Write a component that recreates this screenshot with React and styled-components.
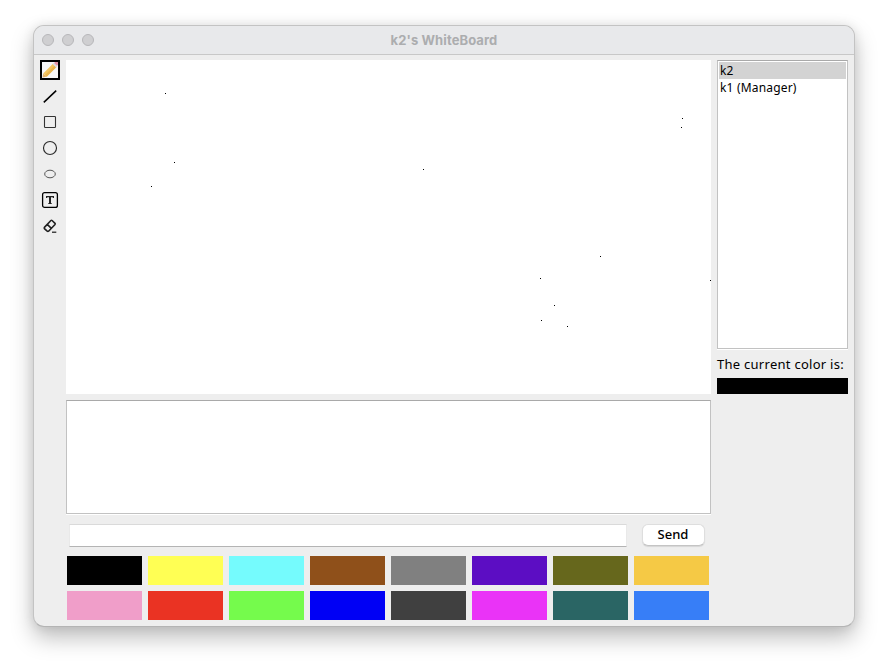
import React from "react";
import styled, { createGlobalStyle } from "styled-components";

const Global = createGlobalStyle`
  * { box-sizing: border-box; }
  html, body { margin: 0; background: #fff; }
  body { overflow: hidden; font-family: "Noto Sans", "Open Sans", sans-serif; color: #000; }
`;

const Desktop = styled.main`
  width: 888px;
  height: 668px;
  padding: 25px 33px 41px;
`;

const Window = styled.section`
  width: 822px;
  height: 602px;
  display: flex;
  flex-direction: column;
  border: 1px solid #c3c3c3;
  border-bottom-color: #b4b4b4;
  border-radius: 11px;
  background: #eee;
  overflow: hidden;
  box-shadow: 0 11px 22px rgba(0, 0, 0, 0.25), 0 0 12px rgba(0, 0, 0, 0.09);
`;

const TitleBar = styled.header`
  height: 29px;
  flex: none;
  display: grid;
  grid-template-columns: 60px 1fr 68px;
  align-items: center;
  padding-left: 8px;
  background: #e8e9eb;
  border-bottom: 1px solid #c8c8c8;
`;

const Lights = styled.div`
  display: flex;
  gap: 8px;
`;

const Light = styled.span`
  width: 12px;
  height: 12px;
  border-radius: 50%;
  background: #cfcfd1;
  border: 1px solid #b7b7b9;
`;

const Title = styled.h1`
  margin: 0;
  text-align: center;
  font: 700 13px/16px Inter, sans-serif;
  letter-spacing: 0.1px;
  color: #acadaf;
`;

const Body = styled.div`
  flex: 1;
  display: grid;
  grid-template-columns: 20px 645px 131px;
  column-gap: 6px;
  padding: 5px 6px;
`;

const Toolbar = styled.nav`
  display: flex;
  flex-direction: column;
  gap: 6px;
`;

const Tool = styled.button`
  width: 20px;
  height: 20px;
  padding: 0;
  border: ${(p) => (p.$active ? "2px solid #000" : "0")};
  background: ${(p) => (p.$active ? "#f6f6f6" : "transparent")};
  display: grid;
  place-items: center;
  svg { display: block; }
`;

const Center = styled.div`
  display: flex;
  flex-direction: column;
`;

const Canvas = styled.svg`
  display: block;
  width: 645px;
  height: 334px;
  background: #fff;
`;

const sunken = `
  background: #fff;
  border: 1px solid #c2c2c2;
  border-top-color: #a9a9a9;
  box-shadow: 0 1px 0 #fff;
`;

const ChatLog = styled.div`
  margin-top: 6px;
  height: 114px;
  ${sunken}
`;

const ChatRow = styled.form`
  display: flex;
  justify-content: space-between;
  margin-top: 10px;
  height: 23px;
  padding: 0 6px 0 3px;
`;

const ChatInput = styled.input`
  width: 558px;
  height: 23px;
  padding: 0 4px;
  background: #fff;
  border: 1px solid #e9e9e9;
  border-top-color: #dadada;
  border-bottom-color: #b4b4b4;
  outline: 0;
`;

const SendButton = styled.button`
  width: 63px;
  height: 22px;
  padding: 0 1px 2px 0;
  border: 1px solid #dedede;
  border-bottom-color: #c4c4c4;
  border-radius: 6px;
  background: #fff;
  box-shadow: 0 1px 1px rgba(0, 0, 0, 0.1);
  font: 500 13px/18px "Noto Sans", sans-serif;
  color: #000;
`;

const Palette = styled.div`
  display: grid;
  grid-template-columns: repeat(8, 75px);
  grid-auto-rows: 29px;
  gap: 6px;
  margin: 9px 0 0 1px;
`;

const Swatch = styled.button`
  padding: 0;
  border: 0;
  background: ${(p) => p.$color};
`;

const Side = styled.aside`
  display: flex;
  flex-direction: column;
`;

const UserList = styled.ul`
  height: 289px;
  margin: 0;
  padding: 1px;
  list-style: none;
  ${sunken}
`;

const User = styled.li`
  height: 17px;
  padding-left: 1px;
  font-size: 12px;
  line-height: 17px;
  letter-spacing: 0.18px;
  white-space: nowrap;
  background: ${(p) => (p.$selected ? "#d3d3d3" : "transparent")};
`;

const ColorLabel = styled.p`
  margin: 7px 0 0;
  height: 16px;
  font-size: 13px;
  line-height: 16px;
  letter-spacing: 0.27px;
  white-space: nowrap;
`;

const CurrentColor = styled.div`
  height: 16px;
  margin-top: 6px;
  background: #000;
`;

const Glyph = ({ size = 20, children }) => (
  <svg width={size} height={size} viewBox={`0 0 ${size} ${size}`} fill="none" stroke="#202020">
    {children}
  </svg>
);

const tools = [
  {
    name: "Pencil",
    icon: (
      <Glyph size={16}>
        <g stroke="none">
          <path d="M.5 15.5 1.2 11.6 4.5 14.8z" fill="#e0b06a" />
          <path d="M1.2 11.4 10.9 1.7 14.4 5.1 4.7 14.8z" fill="#f3c560" />
          <path d="M3 13.1 12.7 3.4 14.4 5.1 4.7 14.8z" fill="#e9b44c" />
          <path d="m10.6 2 1.5-1.5 3.4 3.4-1.5 1.5z" fill="#d9dbe3" />
          <path d="m12.1.9 1-.9 2.9 0v2.8l-.9 1z" fill="#e391a2" />
        </g>
      </Glyph>
    ),
  },
  { name: "Line", icon: <Glyph><path d="M3.8 16.4 16.2 4.6" stroke="#000" strokeWidth="1.5" /></Glyph> },
  { name: "Rectangle", icon: <Glyph><rect x="4.5" y="4.5" width="11" height="11" rx=".8" stroke="#333" strokeWidth="1.1" /></Glyph> },
  { name: "Circle", icon: <Glyph><circle cx="10" cy="10" r="6.5" stroke="#2b2b2b" strokeWidth="1.15" /></Glyph> },
  { name: "Oval", icon: <Glyph><ellipse cx="10" cy="10" rx="5.3" ry="3.8" stroke="#555" /></Glyph> },
  {
    name: "Text",
    icon: (
      <Glyph>
        <rect x="2.6" y="2.6" width="14.8" height="14.8" rx="2" stroke="#000" strokeWidth="1.3" />
        <path d="M6.6 8V6.6h6.8V8M8.3 13.5h3.4" stroke="#222" strokeWidth="1.2" />
        <path d="M10 6.5v7" stroke="#222" strokeWidth="2" />
      </Glyph>
    ),
  },
  {
    name: "Eraser",
    icon: (
      <Glyph>
        <path d="M4.4 11.4 10.9 4.5Q11.5 4 12.1 4.5L15 7.3Q15.5 7.9 15 8.5L8.6 15.2Q7.9 15.7 7.2 15.2L4.4 12.6Q3.9 12 4.4 11.4zM7.2 8.4 11.4 12.4" strokeWidth="1.6" />
        <path d="M12 16.2H16.3" stroke="#444" strokeWidth="1.4" />
      </Glyph>
    ),
  },
];

const dots = [
  [99, 33], [108, 102], [85, 126], [616, 58], [615, 67], [357, 109],
  [534, 196], [474, 218], [644, 220], [488, 245], [475, 260], [501, 266],
];

const colors = [
  "#000000", "#ffff54", "#75fbfd", "#8f501a", "#808080", "#5c0dc3", "#66671c", "#f5c945",
  "#f09ec9", "#ea3323", "#75fb4c", "#0000f5", "#404040", "#ea33f7", "#2a6564", "#377ef7",
];

export default function App() {
  return (
    <Desktop>
      <Global />
      <Window>
        <TitleBar>
          <Lights><Light /><Light /><Light /></Lights>
          <Title>k2's WhiteBoard</Title>
        </TitleBar>
        <Body>
          <Toolbar>
            {tools.map((t, i) => (
              <Tool key={t.name} aria-label={t.name} $active={i === 0}>{t.icon}</Tool>
            ))}
          </Toolbar>
          <Center>
            <Canvas viewBox="0 0 645 334" shapeRendering="crispEdges">
              {dots.map(([x, y]) => <rect key={`${x}-${y}`} x={x} y={y} width="1" height="1" />)}
            </Canvas>
            <ChatLog />
            <ChatRow>
              <ChatInput aria-label="Message" />
              <SendButton type="button">Send</SendButton>
            </ChatRow>
            <Palette>
              {colors.map((c) => <Swatch key={c} aria-label={c} $color={c} />)}
            </Palette>
          </Center>
          <Side>
            <UserList>
              <User $selected>k2</User>
              <User>k1 (Manager)</User>
            </UserList>
            <ColorLabel>The current color is:</ColorLabel>
            <CurrentColor />
          </Side>
        </Body>
      </Window>
    </Desktop>
  );
}
